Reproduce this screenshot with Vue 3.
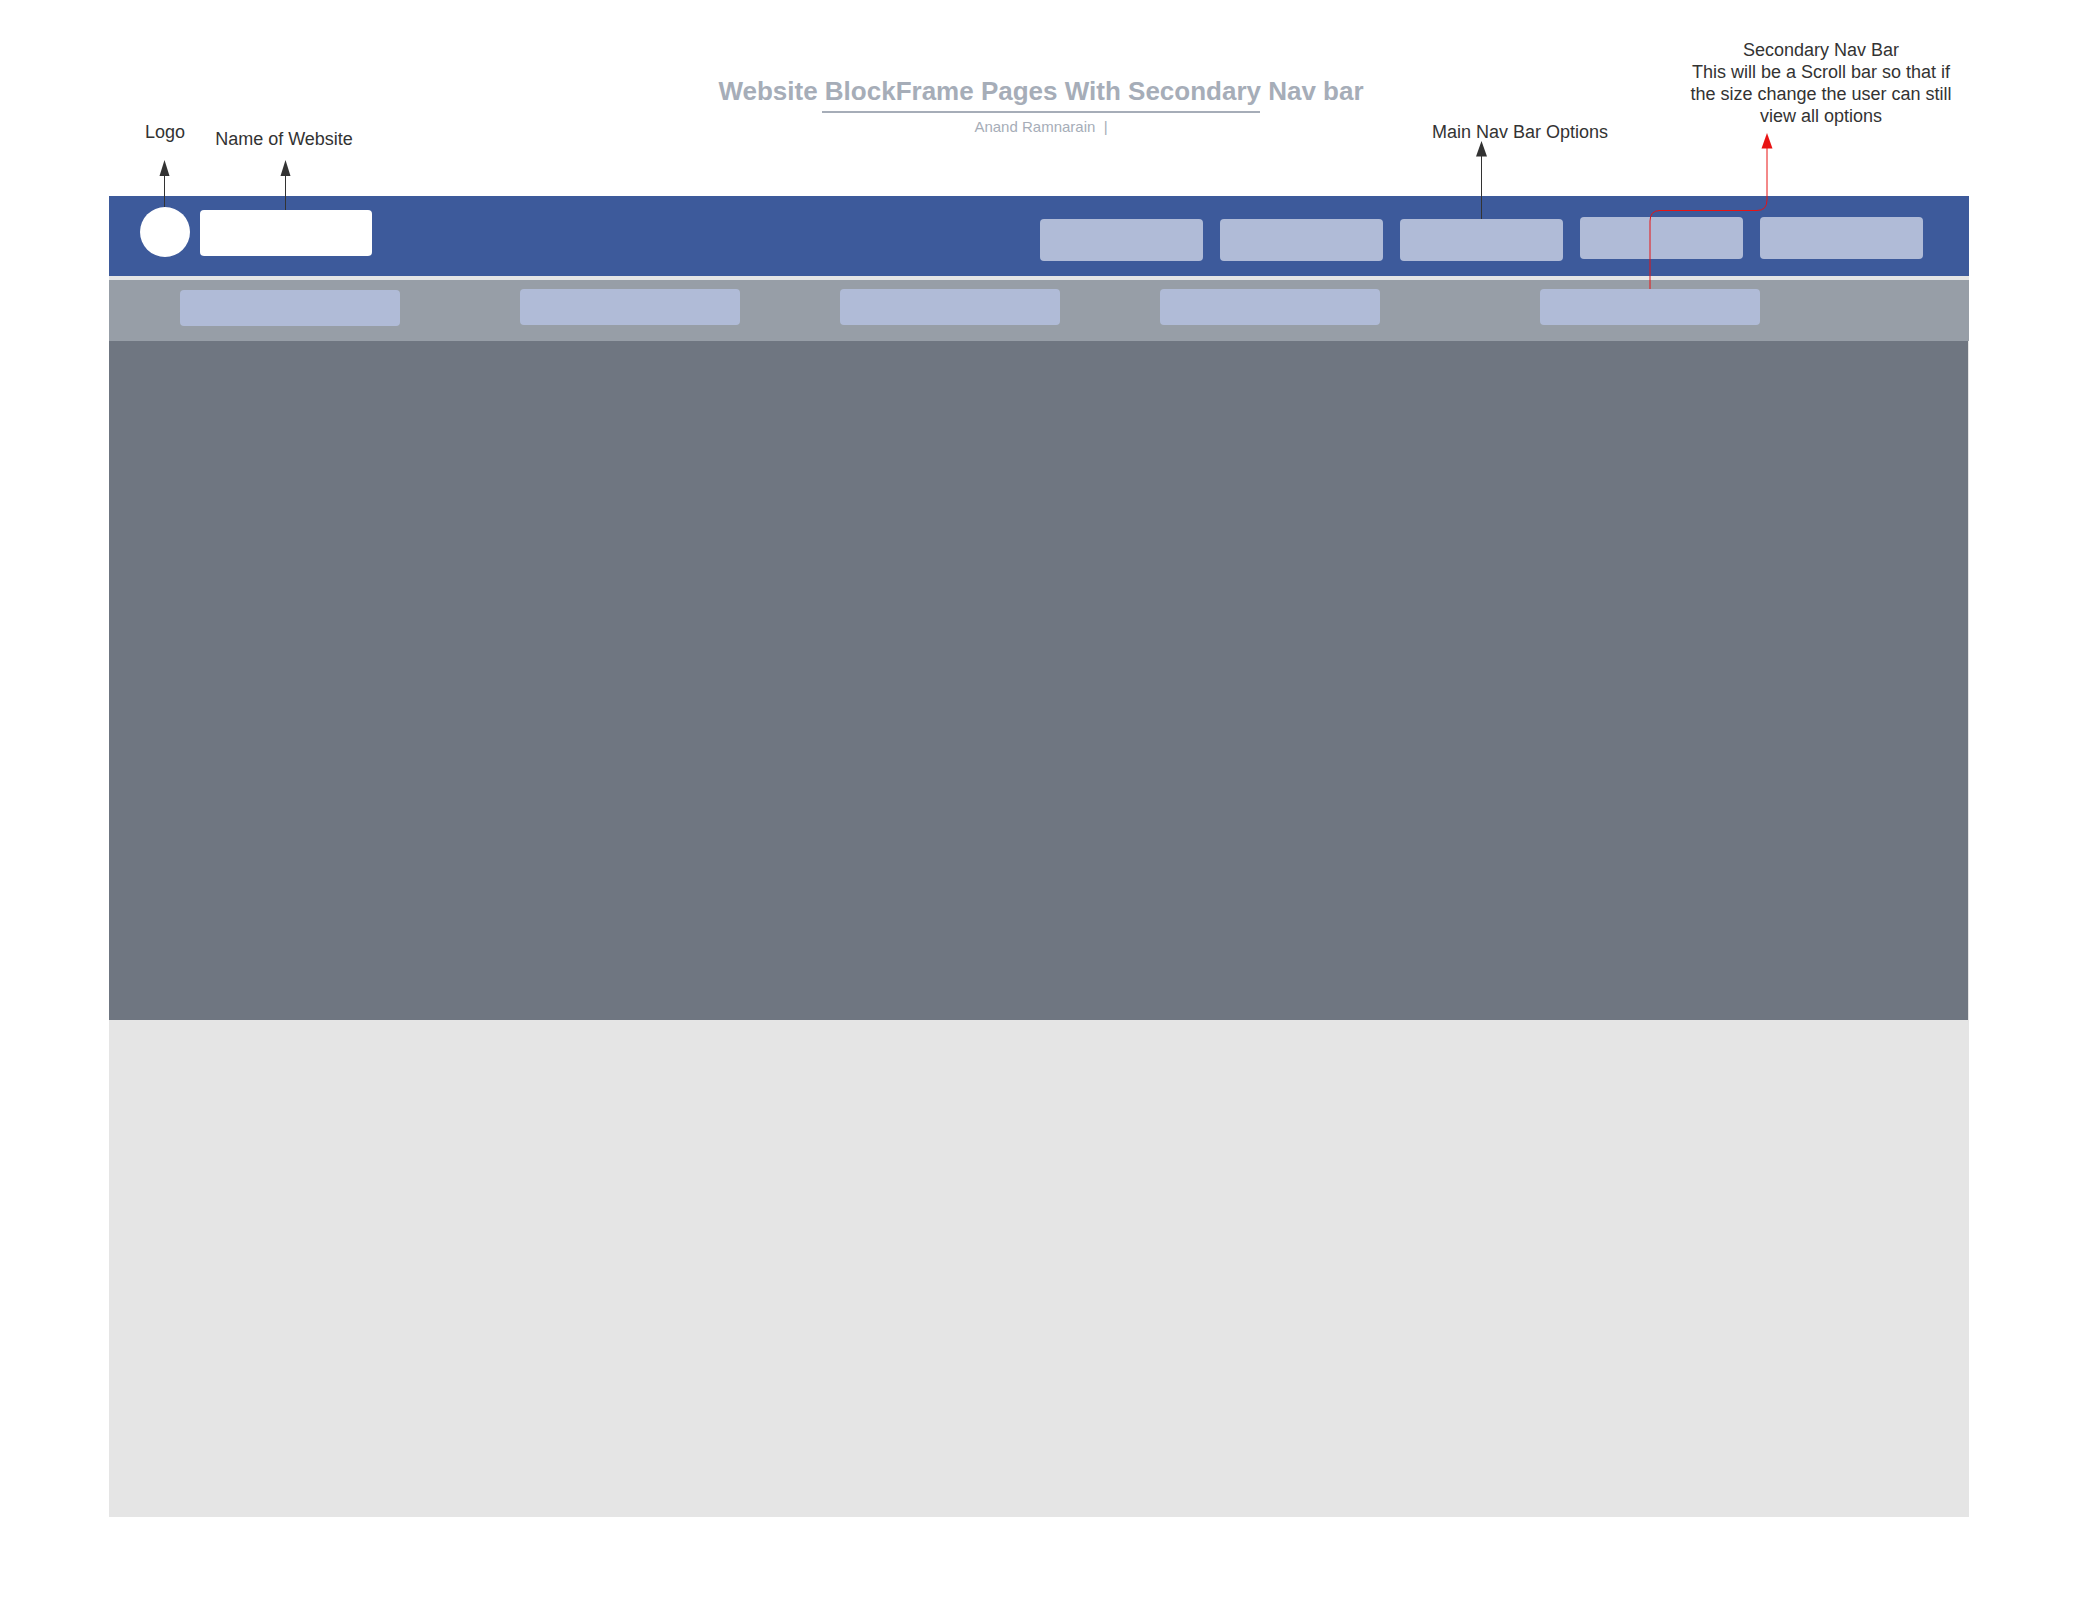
<script setup>
const mainSlots = [
  { id: 1 },
  { id: 2 },
  { id: 3, note: true },
  { id: 4, raised: true },
  { id: 5, raised: true },
]
const secondarySlots = [1, 2, 3, 4, 5]
</script>

<template>
  <div class="page">
    <header class="heading">
      <h1 class="heading__title">Website BlockFrame Pages With Secondary Nav bar</h1>
      <p class="heading__author">Anand Ramnarain&nbsp; |</p>
    </header>

    <main class="frame">
      <div class="topbar">
        <a class="logo" href="#" aria-label="Logo">
          <span class="note note--logo">Logo</span>
          <svg class="arrow" width="12" height="47" viewBox="0 0 12 47" aria-hidden="true">
            <path d="M5.5 15V47" stroke="#333" stroke-width="1" />
            <path d="M5.500 0L10.500 16H.5Z" fill="#333" />
          </svg>
        </a>
        <a class="site-name" href="#" aria-label="Name of Website">
          <span class="note note--name">Name of Website</span>
          <svg class="arrow" width="12" height="50" viewBox="0 0 12 50" aria-hidden="true">
            <path d="M5.5 15V50" stroke="#333" stroke-width="1" />
            <path d="M5.500 0L10.500 16H.5Z" fill="#333" />
          </svg>
        </a>
        <nav class="main-nav" aria-label="Main Nav Bar Options">
          <a
            v-for="slot in mainSlots"
            :key="slot.id"
            class="main-nav__slot"
            :class="{ 'main-nav__slot--raised': slot.raised }"
            href="#"
            :aria-label="`Option ${slot.id}`"
          >
            <template v-if="slot.note">
              <span class="note note--main">Main Nav Bar Options</span>
              <svg class="arrow" width="12" height="78" viewBox="0 0 12 78" aria-hidden="true">
                <path d="M5.5 15V78" stroke="#333" stroke-width="1" />
                <path d="M5.500 0L11 15.500H0Z" fill="#333" />
              </svg>
            </template>
          </a>
        </nav>
      </div>

      <nav class="secondary-nav" aria-label="Secondary Nav Bar">
        <a
          v-for="slot in secondarySlots"
          :key="slot"
          class="secondary-nav__slot"
          :class="`secondary-nav__slot--${slot}`"
          href="#"
          :aria-label="`Secondary option ${slot}`"
        >
          <template v-if="slot === 5">
            <span class="note note--secondary">
              Secondary Nav Bar<br />This will be a Scroll bar so that if<br />the size change the user can still<br />view all options
            </span>
            <svg class="arrow" width="130" height="156" viewBox="0 0 130 156" aria-hidden="true">
              <path
                d="M6 156V88Q6 77.500 16 77.500H113Q123 77.500 123 67V15"
                fill="none"
                stroke="#e81313"
                stroke-width="1"
              />
              <path d="M123 0L128.500 15.500H117.500Z" fill="#e81313" />
            </svg>
          </template>
        </a>
      </nav>

      <section class="hero"></section>
      <section class="content"></section>
    </main>
  </div>
</template>

<style>
body {
  margin: 0;
  background: #fff;
}
</style>

<style scoped>
.page {
  padding: 0 111px 83px 109px;
  font-family: "Liberation Sans", Arial, sans-serif;
  color: #333;
}

.heading {
  display: flex;
  flex-direction: column;
  align-items: center;
  box-sizing: border-box;
  height: 196px;
  padding: 75px 0 0 4px;
  color: #a6adb8;
}

.heading__title {
  margin: 0;
  font-size: 26px;
  line-height: 32px;
  white-space: nowrap;
}

.heading__title::after {
  content: "";
  display: block;
  width: 438px;
  height: 2px;
  margin: 4px auto 0;
  background: #a6adb8;
}

.heading__author {
  margin: 4px 0 0;
  font-size: 15px;
  line-height: 20px;
}

.frame {
  background: #e5e5e5;
}

.topbar {
  display: flex;
  align-items: flex-start;
  box-sizing: border-box;
  height: 80px;
  padding: 0 46px 0 31px;
  background: #3d5a9b;
}

.logo {
  position: relative;
  width: 50px;
  height: 50px;
  margin-top: 11px;
  border-radius: 50%;
  background: #fff;
}

.site-name {
  position: relative;
  width: 172px;
  height: 46px;
  margin: 14px 0 0 10px;
  border-radius: 4px;
  background: #fff;
}

.main-nav {
  display: flex;
  gap: 17px;
  margin-left: auto;
  padding-top: 21px;
}

.main-nav__slot {
  position: relative;
  width: 163px;
  height: 42px;
  margin-top: 2px;
  border-radius: 4px;
  background: #b0bbd7;
}

.main-nav__slot--raised {
  margin-top: 0;
}

.secondary-nav {
  display: grid;
  grid-template-columns: 71fr 220px 120fr 220px 100fr 220px 100fr 220px 160fr 220px 209fr;
  box-sizing: border-box;
  height: 61px;
  margin-top: 4px;
  padding-top: 9px;
  background: #979ea7;
}

.secondary-nav__slot {
  position: relative;
  grid-row: 1;
  height: 36px;
  border-radius: 4px;
  background: #b0bbd7;
}

.secondary-nav__slot--1 {
  grid-column: 2;
  margin-top: 1px;
}

.secondary-nav__slot--2 {
  grid-column: 4;
}

.secondary-nav__slot--3 {
  grid-column: 6;
}

.secondary-nav__slot--4 {
  grid-column: 8;
}

.secondary-nav__slot--5 {
  grid-column: 10;
}

.hero {
  height: 679px;
  margin-right: 1px;
  background: #6f7681;
}

.content {
  height: 497px;
}

a {
  color: #333;
  text-decoration: none;
}

/* Callouts sit above the block they describe */
.note {
  position: absolute;
  left: 50%;
  font-size: 18px;
  line-height: 22px;
  text-align: center;
  white-space: nowrap;
  transform: translateX(-50%);
}

.note--logo {
  bottom: calc(100% + 64px);
}

.note--name {
  bottom: calc(100% + 60px);
  left: 84px;
}

.note--main {
  bottom: calc(100% + 76px);
  left: 120px;
}

.note--secondary {
  bottom: calc(100% + 162px);
  left: 281px;
}

.arrow {
  position: absolute;
  bottom: 100%;
  left: calc(50% - 6px);
}
</style>
